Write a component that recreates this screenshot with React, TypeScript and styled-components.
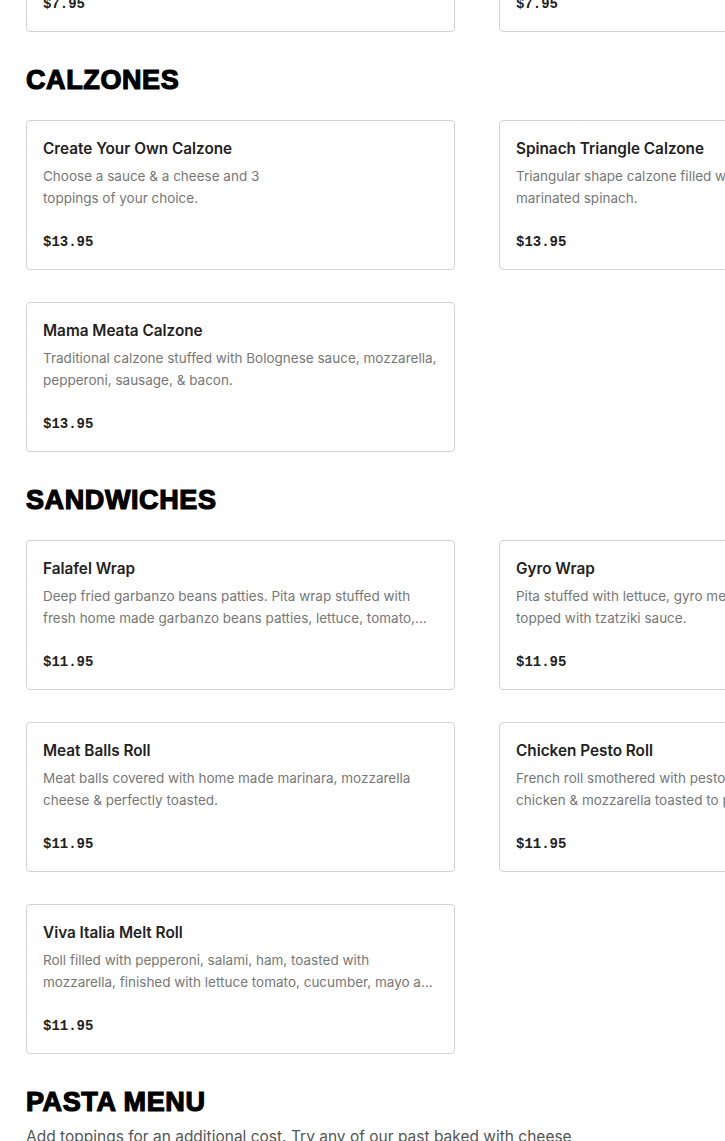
import React from 'react'
import styled, { createGlobalStyle } from 'styled-components'

const GlobalStyle = createGlobalStyle`
  html, body {
    margin: 0;
    padding: 0;
    overflow: hidden;
    background: #fff;
  }
  body {
    font-family: Inter, "Liberation Sans", sans-serif;
    color: #222;
  }
`

const Page = styled.div`
  padding: 0 0 0 26px;
  margin-top: -118px;
  width: 960px;
`

const Section = styled.section`
  margin-bottom: 30px;
`

const SectionTitle = styled.h2<{ $gap?: number }>`
  margin: 0 0 ${(p) => p.$gap ?? 22}px;
  font-family: "Liberation Sans", Arial, sans-serif;
  font-weight: 700;
  font-size: 27px;
  line-height: 36px;
  letter-spacing: 0.6px;
  -webkit-text-stroke: 1.2px #000;
  color: #000;
  text-transform: uppercase;
`

const SectionNote = styled.p`
  margin: 0;
  max-width: 550px;
  font-size: 15.5px;
  line-height: 22px;
  color: #555;
`

const Grid = styled.div`
  display: grid;
  grid-template-columns: 429px 429px;
  column-gap: 44px;
  row-gap: 32px;
`

const Card = styled.div`
  box-sizing: border-box;
  height: 150px;
  border: 1px solid #d4d4d4;
  border-radius: 4px;
  padding: 16px 16px 17px;
  display: flex;
  flex-direction: column;
`

const ItemName = styled.div`
  font-size: 15.3px;
  font-weight: 600;
  line-height: 24px;
  color: #222;
`

const ItemDesc = styled.div`
  margin-top: 4px;
  font-size: 13.5px;
  line-height: 22px;
  color: #777;
  height: 44px;
  overflow: hidden;
  display: -webkit-box;
  -webkit-line-clamp: 2;
  -webkit-box-orient: vertical;
`

const ItemPrice = styled.div`
  margin-top: auto;
  font-family: "Liberation Mono", "DejaVu Sans Mono", monospace;
  font-weight: 700;
  font-size: 14px;
  line-height: 20px;
  color: #222;
`

type Item = {
  name: string
  desc: React.ReactNode
  price: string
}

const previous: Item[] = [
  { name: 'Garlic Knots', desc: 'Fresh baked knots brushed with garlic butter.', price: '$7.95' },
  { name: 'Cheesy Bread', desc: 'Baked bread topped with mozzarella.', price: '$7.95' },
]

const calzones: Item[] = [
  {
    name: 'Create Your Own Calzone',
    desc: (
      <>
        Choose a sauce &amp; a cheese and 3
        <br />
        toppings of your choice.
      </>
    ),
    price: '$13.95',
  },
  {
    name: 'Spinach Triangle Calzone',
    desc: (
      <>
        Triangular shape calzone filled with mozzarella and
        <br />
        marinated spinach.
      </>
    ),
    price: '$13.95',
  },
  {
    name: 'Mama Meata Calzone',
    desc: 'Traditional calzone stuffed with Bolognese sauce, mozzarella, pepperoni, sausage, & bacon.',
    price: '$13.95',
  },
]

const sandwiches: Item[] = [
  {
    name: 'Falafel Wrap',
    desc: 'Deep fried garbanzo beans patties. Pita wrap stuffed with fresh home made garbanzo beans patties, lettuce, tomato, cucumber & tahini sauce.',
    price: '$11.95',
  },
  {
    name: 'Gyro Wrap',
    desc: (
      <>
        Pita stuffed with lettuce, gyro meat, tomato, onion,
        <br />
        topped with tzatziki sauce.
      </>
    ),
    price: '$11.95',
  },
  {
    name: 'Meat Balls Roll',
    desc: 'Meat balls covered with home made marinara, mozzarella cheese & perfectly toasted.',
    price: '$11.95',
  },
  {
    name: 'Chicken Pesto Roll',
    desc: (
      <>
        French roll smothered with pesto sauce, grilled
        <br />
        chicken &amp; mozzarella toasted to perfection.
      </>
    ),
    price: '$11.95',
  },
  {
    name: 'Viva Italia Melt Roll',
    desc: 'Roll filled with pepperoni, salami, ham, toasted with mozzarella, finished with lettuce tomato, cucumber, mayo and italian dressing.',
    price: '$11.95',
  },
]

const MenuCard: React.FC<{ item: Item }> = ({ item }) => (
  <Card>
    <ItemName>{item.name}</ItemName>
    <ItemDesc>{item.desc}</ItemDesc>
    <ItemPrice>{item.price}</ItemPrice>
  </Card>
)

const MenuGrid: React.FC<{ items: Item[] }> = ({ items }) => (
  <Grid>
    {items.map((item) => (
      <MenuCard key={item.name} item={item} />
    ))}
  </Grid>
)

const App: React.FC = () => (
  <>
    <GlobalStyle />
    <Page>
      <Section>
        <MenuGrid items={previous} />
      </Section>

      <Section>
        <SectionTitle>Calzones</SectionTitle>
        <MenuGrid items={calzones} />
      </Section>

      <Section>
        <SectionTitle>Sandwiches</SectionTitle>
        <MenuGrid items={sandwiches} />
      </Section>

      <Section>
        <SectionTitle $gap={6}>Pasta Menu</SectionTitle>
        <SectionNote>
          Add toppings for an additional cost. Try any of our past baked with cheese
          for an additional cost.
        </SectionNote>
      </Section>
    </Page>
  </>
)

export default App
